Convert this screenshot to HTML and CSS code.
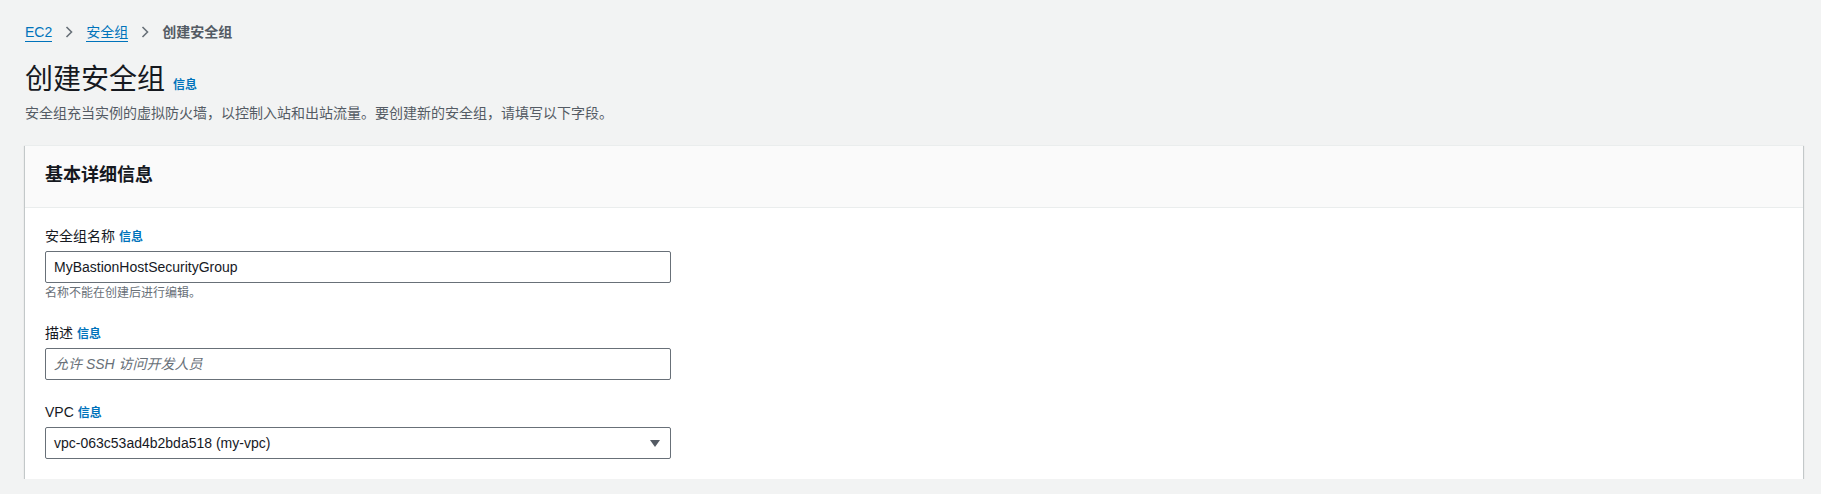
FILE: index.html
```html
<!DOCTYPE html>
<html lang="zh-CN">
<head>
<meta charset="utf-8">
<title>创建安全组</title>
<link rel="stylesheet" href="styles.css">
</head>
<body>
<div class="page">
  <nav class="crumbs">
    <a class="crumb-link" href="#">EC2</a>
    <svg class="chev" width="8" height="12" viewBox="0 0 8 12"><path d="M1.5 1 L6.5 6 L1.5 11" fill="none" stroke="#687078" stroke-width="1.6"/></svg>
    <a class="crumb-link" href="#">安全组</a>
    <svg class="chev" width="8" height="12" viewBox="0 0 8 12"><path d="M1.5 1 L6.5 6 L1.5 11" fill="none" stroke="#687078" stroke-width="1.6"/></svg>
    <span class="crumb-current">创建安全组</span>
  </nav>

  <div class="title-row">
    <h1 class="title">创建安全组</h1>
    <a class="info" href="#">信息</a>
  </div>
  <p class="desc">安全组充当实例的虚拟防火墙，以控制入站和出站流量。要创建新的安全组，请填写以下字段。</p>

  <section class="card">
    <header class="card-head">
      <h2 class="card-title">基本详细信息</h2>
    </header>
    <div class="card-body">
      <div class="field">
        <div class="label">安全组名称 <a class="info" href="#">信息</a></div>
        <div class="input"><span class="value">MyBastionHostSecurityGroup</span></div>
        <div class="hint">名称不能在创建后进行编辑。</div>
      </div>
      <div class="field">
        <div class="label">描述 <a class="info" href="#">信息</a></div>
        <div class="input"><span class="placeholder">允许 SSH 访问开发人员</span></div>
      </div>
      <div class="field">
        <div class="label">VPC <a class="info" href="#">信息</a></div>
        <div class="input select">
          <span class="value">vpc-063c53ad4b2bda518 (my-vpc)</span>
          <svg class="caret" width="10" height="7" viewBox="0 0 10 7"><path d="M0 0 H10 L5 7 Z" fill="#545b64"/></svg>
        </div>
      </div>
    </div>
  </section>
</div>
</body>
</html>
```

FILE: styles.css
```css
* { box-sizing: border-box; }
html, body { margin: 0; padding: 0; }
body {
  background: #f2f3f3;
  color: #16191f;
  font-family: "Liberation Sans", "Noto Sans CJK SC", sans-serif;
  font-size: 14px;
  line-height: 20px;
}
a { text-decoration: none; }

.page {
  padding: 22px 18px 0 25px;
}

.crumbs {
  display: flex;
  align-items: center;
  height: 20px;
  gap: 13px;
}
.crumb-link {
  color: #0073bb;
  font-size: 14px;
  border-bottom: 1px solid #0073bb;
  line-height: 17px;
  padding-top: 2px;
}
.chev { display: block; }
.crumb-current {
  color: #545b64;
  font-weight: 700;
  font-size: 14px;
}

.title-row {
  display: flex;
  align-items: baseline;
  gap: 8px;
  margin-top: 20px;
}
.title {
  margin: 0;
  font-size: 28px;
  line-height: 36px;
  font-weight: 400;
  color: #16191f;
}
.info {
  color: #0073bb;
  font-size: 12px;
  font-weight: 700;
  line-height: 16px;
}
.desc {
  margin: 5px 0 0;
  color: #545b64;
  font-size: 14px;
  line-height: 20px;
}

.card {
  margin-top: 22px;
  background: #fff;
  border-top: 1px solid #eaeded;
  box-shadow: 0 1px 1px 0 rgba(0,28,36,.3), 1px 1px 1px 0 rgba(0,28,36,.15), -1px 1px 1px 0 rgba(0,28,36,.15);
}
.card-head {
  background: #fafafa;
  border-bottom: 1px solid #eaeded;
  padding: 18px 20px 21px;
}
.card-title {
  margin: 0;
  font-size: 18px;
  line-height: 22px;
  font-weight: 700;
  color: #16191f;
}
.card-body {
  padding: 18px 20px 20px;
  display: flex;
  flex-direction: column;
  gap: 22px;
}

.field { display: flex; flex-direction: column; }
.label {
  font-size: 14px;
  line-height: 20px;
  color: #16191f;
  margin-bottom: 5px;
}
.label .info { font-size: 12px; }

.input {
  width: 626px;
  height: 32px;
  border: 1px solid #687078;
  border-radius: 2px;
  background: #fff;
  padding: 0 8px;
  display: flex;
  align-items: center;
  justify-content: space-between;
  font-size: 14px;
}
.value { color: #16191f; }
.placeholder { color: #687078; font-style: italic; }
.select { padding-right: 10px; }
.caret { display: block; }

.hint {
  margin-top: 2px;
  font-size: 12px;
  line-height: 16px;
  color: #687078;
}
```
